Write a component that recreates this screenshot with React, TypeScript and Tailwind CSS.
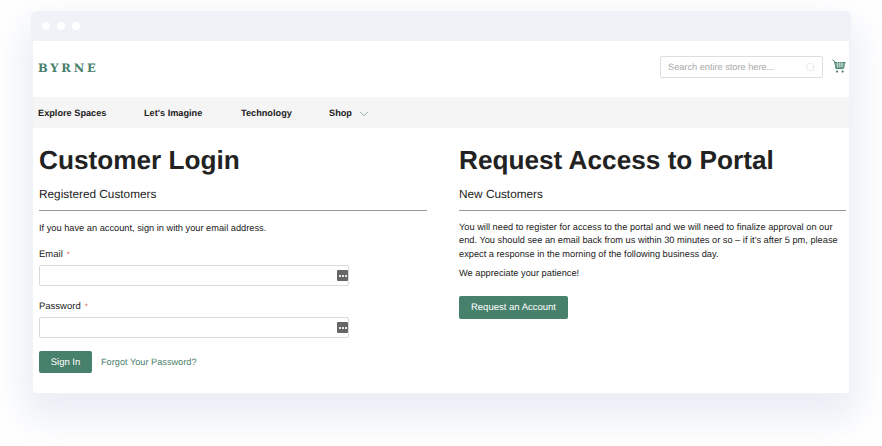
import React from 'react';
import { ChevronDown, Search } from 'lucide-react';

const CartIcon = () => (
  <svg width="14" height="15" viewBox="0 0 14 15" className="text-[#47806b] -mt-[2px]">
    <path d="M0.5 0.8 L2.6 2.2 L4 9.6 H11.6" fill="none" stroke="currentColor" strokeWidth="1" />
    <path d="M2.6 3 H13.6 L12.2 9 H3.8 Z" fill="currentColor" />
    <path d="M3.4 5 H13 M3.6 7 H12.6 M5.6 3 V9 M7.8 3 V9 M10 3 V9" stroke="#ffffff" strokeWidth="0.6" />
    <circle cx="5" cy="12.6" r="1.1" fill="currentColor" />
    <circle cx="10.6" cy="12.6" r="1.1" fill="currentColor" />
  </svg>
);

const KeyBadge = () => (
  <div className="w-[11px] h-[11px] rounded-[1px] bg-[#666666] flex items-center justify-center gap-[1px]">
    <span className="w-[2px] h-[2px] bg-[#e8e8e8]" />
    <span className="w-[2px] h-[2px] bg-[#e8e8e8]" />
    <span className="w-[2px] h-[2px] bg-[#e8e8e8]" />
  </div>
);

const Field = ({ label }: { label: string }) => (
  <div>
    <div className="h-[13px] pt-[1px] flex items-center text-[9.5px] leading-[13px] text-[#222222]">
      {label}
      <span className="ml-[4px] text-[#e0664f] text-[8px]">*</span>
    </div>
    <div className="mt-[5px] w-[310px] h-[21px] bg-white border border-[#d9d9d9] rounded-[2px] flex items-center justify-end">
      <KeyBadge />
    </div>
  </div>
);

const Button = ({ children, className }: { children: React.ReactNode; className: string }) => (
  <div className={`bg-[#47806b] rounded-[2px] text-white text-[9.5px] font-medium flex items-center justify-center pt-[1px] ${className}`}>
    {children}
  </div>
);

export default function App() {
  return (
    <div className="w-[882px] h-[446px] bg-white overflow-hidden pt-[11px] pl-[31px] font-['Liberation_Sans','Arial',sans-serif] [text-rendering:geometricPrecision] antialiased">
      <div className="w-[820px] bg-[#eff3f8] rounded-[5px] px-[2px] pb-[1px] shadow-[0_18px_36px_8px_rgba(190,200,225,0.32)]">
        <div className="h-[30px] flex items-center gap-[7px] pl-[9px]">
          <span className="w-[8px] h-[8px] rounded-full bg-white" />
          <span className="w-[8px] h-[8px] rounded-full bg-white" />
          <span className="w-[8px] h-[8px] rounded-full bg-white" />
        </div>
        <div className="bg-white h-[352px] rounded-b-[3px]">
          <div className="h-[56px] flex items-center justify-between pl-[5px] pr-[3px]">
            <div className="font-['DejaVu_Serif',serif] font-bold text-[11.5px] tracking-[2.8px] text-[#47806b]">BYRNE</div>
            <div className="flex items-center gap-[9px] pb-[4px]">
              <div className="w-[163px] h-[22px] border border-[#dedede] rounded-[2px] flex items-center justify-between pl-[7px] pr-[6px]">
                <span className="text-[9.2px] pt-[1px] text-[#a8a8a8]">Search entire store here...</span>
                <Search size={11} strokeWidth={1} className="text-[#d0d0d0]" />
              </div>
              <CartIcon />
            </div>
          </div>
          <div className="h-[31px] pt-[2px] bg-[#f5f5f5] flex items-center pl-[5px] text-[9.2px] font-bold text-[#222222]">
            <span className="w-[106px]">Explore Spaces</span>
            <span className="w-[97px]">Let's Imagine</span>
            <span className="w-[88px]">Technology</span>
            <span>Shop</span>
            <ChevronDown size={14} strokeWidth={1} className="ml-[5px] text-[#47806b]" />
          </div>
          <div className="grid grid-cols-[388px_387px] gap-x-[32px] pl-[6px] pt-[16px]">
            <div>
              <h1 className="text-[26.2px] leading-[32px] font-bold text-[#222222]">Customer Login</h1>
              <h2 className="mt-[10px] text-[11.8px] leading-[16px] text-[#222222]">Registered Customers</h2>
              <div className="mt-[8px] border-t border-[#999999]" />
              <p className="mt-[10px] pt-[1px] text-[9.25px] leading-[13.4px] text-[#222222]">If you have an account, sign in with your email address.</p>
              <div className="mt-[12px] flex flex-col gap-[13px]">
                <Field label="Email" />
                <Field label="Password" />
              </div>
              <div className="mt-[13px] flex items-center gap-[9px]">
                <Button className="w-[53px] h-[22px]">Sign In</Button>
                <span className="text-[9.2px] text-[#47806b]">Forgot Your Password?</span>
              </div>
            </div>
            <div>
              <h1 className="text-[26.2px] leading-[32px] font-bold text-[#222222]">Request Access to Portal</h1>
              <h2 className="mt-[10px] text-[11.8px] leading-[16px] text-[#222222]">New Customers</h2>
              <div className="mt-[8px] border-t border-[#999999]" />
              <p className="mt-[10px] text-[9.25px] leading-[13.4px] text-[#222222]">
                You will need to register for access to the portal and we will need to finalize approval on our end. You should see an email back from us within 30 minutes or so – if it's after 5 pm, please expect a response in the morning of the following business day.
              </p>
              <p className="mt-[6px] text-[9.25px] leading-[13.4px] text-[#222222]">We appreciate your patience!</p>
              <Button className="mt-[15px] w-[109px] h-[23px]">Request an Account</Button>
            </div>
          </div>
        </div>
      </div>
    </div>
  );
}
